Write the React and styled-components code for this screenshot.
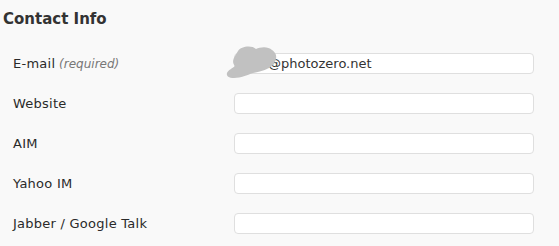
import React from "react"
import styled, { createGlobalStyle } from "styled-components"

const GlobalStyle = createGlobalStyle`
  html, body {
    margin: 0;
    padding: 0;
    background: #f9f9f9;
  }
`

const fields = [
  { label: "E-mail", required: true, value: "@photozero.net" },
  { label: "Website" },
  { label: "AIM" },
  { label: "Yahoo IM" },
  { label: "Jabber / Google Talk" }
]

// grey smear hiding the mailbox name
const Blur = () => (
  <BlurMark width="52" height="34" viewBox="0 0 52 34">
    <path
      d="M13 6 C16 1 27 0 31 4 C35 2 43 1 47 5 C50 7 52 10 51 14 C50 18 48 21 44 23 C38 26 33 27 28 28 C22 30 16 33 9 33 C4 33 1 31 2 28 C3 25 8 23 10 21 C7 18 8 14 10 11 C11 9 12 8 13 6 Z"
      fill="#c1c1c1"
    />
  </BlurMark>
)

const ContactInfo = () => (
  <Section>
    <Heading>Contact Info</Heading>
    <Table>
      {fields.map(f => (
        <Row key={f.label}>
          <Label>
            {f.label}
            {f.required && <Required> (required)</Required>}
          </Label>
          <Cell>
            <Input
              type="text"
              defaultValue={f.value || ""}
              $indent={f.value ? 29 : 0}
            />
            {f.value && <Blur />}
          </Cell>
        </Row>
      ))}
    </Table>
  </Section>
)

export default function App() {
  return (
    <>
      <GlobalStyle />
      <ContactInfo />
    </>
  )
}

const Section = styled.div`
  padding: 9px 0 0 3px;
  font-family: "DejaVu Sans", Verdana, sans-serif;
  color: #333;
`

const Heading = styled.h3`
  margin: 0 0 24px;
  font-size: 15px;
  font-weight: bold;
  line-height: 20px;
  color: #333;
`

const Table = styled.div`
  display: flex;
  flex-direction: column;
  gap: 19px;
`

const Row = styled.div`
  display: grid;
  grid-template-columns: 231px 300px;
  align-items: center;
  height: 21px;
`

const Label = styled.div`
  padding-left: 10px;
  font-size: 13px;
  letter-spacing: 0.25px;
  color: #2a2a2a;
`

const Required = styled.span`
  font-size: 12px;
  letter-spacing: 0;
  font-style: italic;
  color: #777;
`

const Cell = styled.div`
  position: relative;
`

const Input = styled.input`
  box-sizing: border-box;
  width: 300px;
  height: 21px;
  margin: 0;
  padding: 0 4px;
  padding-left: ${p => 4 + p.$indent}px;
  border: 1px solid #dfdfdf;
  border-radius: 4px;
  background: #fff;
  font-family: "DejaVu Sans", Verdana, sans-serif;
  font-size: 13px;
  color: #333;
  outline: none;
`

const BlurMark = styled.svg`
  position: absolute;
  left: -9px;
  top: -8px;
`
